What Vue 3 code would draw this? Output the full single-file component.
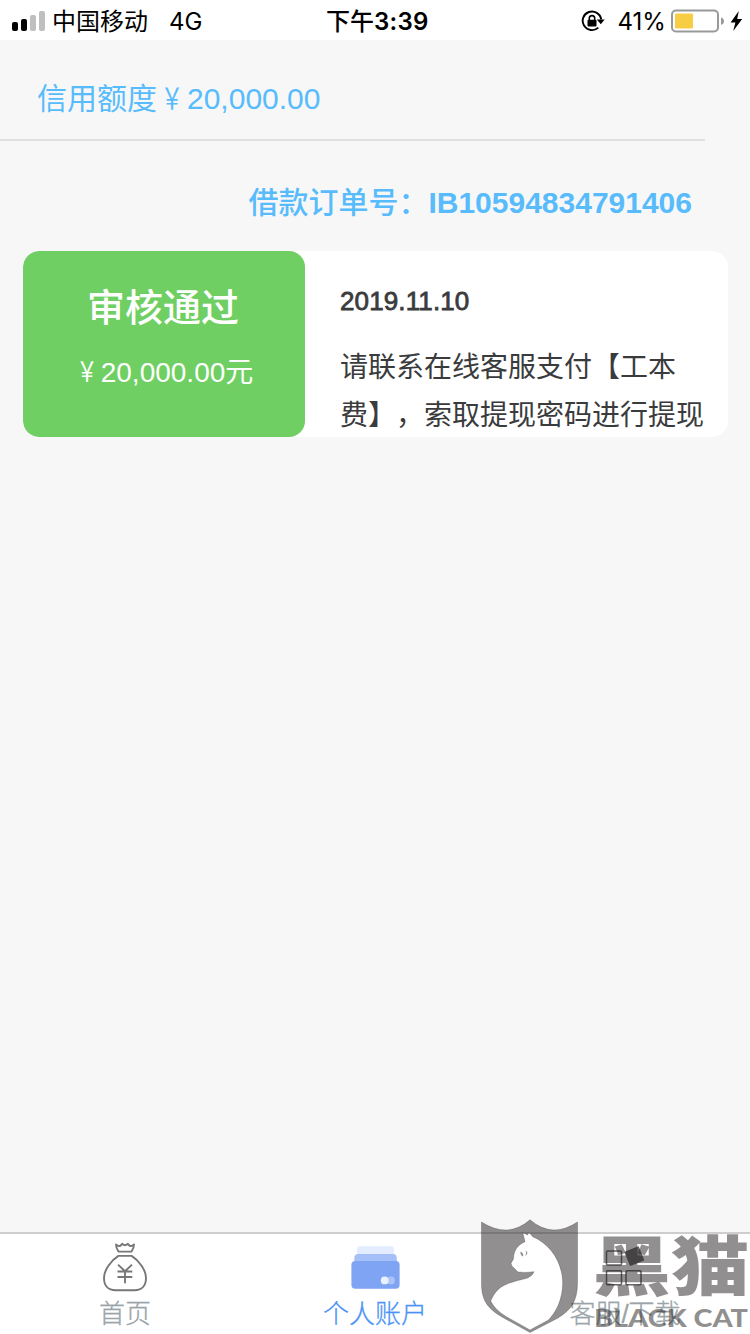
<template>
  <div class="account-page">
    <header class="status-bar">
      <div class="status-left">
        <svg class="signal" width="34" height="22" viewBox="0 0 34 22">
          <rect x="0" y="12" width="6" height="9" rx="2" fill="#000" />
          <rect x="9" y="9" width="6" height="12" rx="2" fill="#000" />
          <rect x="18" y="5" width="6" height="16" rx="2" fill="#bfbfbf" />
          <rect x="27" y="1" width="6" height="20" rx="2" fill="#bfbfbf" />
        </svg>
        <span class="carrier">中国移动</span>
        <span class="network">4G</span>
      </div>
      <div class="status-time">下午<b>3:39</b></div>
      <div class="status-right">
        <svg class="lock" width="24" height="24" viewBox="0 0 24 24">
          <path d="M17.3 18.6A9.3 9.3 0 1 1 20.2 10.5" fill="none" stroke="#000" stroke-width="1.9" />
          <path d="M15.8 10.6h7.9l-3.9 4.7z" fill="#000" />
          <rect x="6.5" y="10.8" width="9" height="6.8" rx="1" fill="#000" />
          <path d="M8.3 11.5V9.3a2.7 2.7 0 0 1 5.4 0v2.2" fill="none" stroke="#000" stroke-width="1.6" />
        </svg>
        <span class="percent">{{ battery }}%</span>
        <svg class="battery" width="54" height="24" viewBox="0 0 54 24">
          <rect x="1" y="1.5" width="46" height="21" rx="4" fill="#fff" stroke="#999" stroke-width="2" />
          <rect x="4" y="4.5" width="18" height="15" rx="1" fill="#f7cd46" />
          <path d="M50 8.5q3 1 3 3.7t-3 3.7z" fill="#999" />
        </svg>
        <svg class="bolt" width="13" height="20" viewBox="0 0 13 20">
          <path d="M8.8 0L0.6 11.4h4.8L3.2 20L12.2 8H7.2z" fill="#000" />
        </svg>
      </div>
    </header>

    <main class="content">
      <div class="credit">信用额度<i class="yuan">￥</i>20,000.00</div>
      <div class="order"><span>借款订单号：</span>{{ orderNo }}</div>

      <section class="card">
        <div class="card-status">
          <div class="status-title">审核通过</div>
          <div class="status-amount"><i class="yuan">￥</i>20,000.00元</div>
        </div>
        <div class="card-info">
          <div class="date">2019.11.10</div>
          <p class="message">请联系在线客服支付【工本费】，索取提现密码进行提现</p>
        </div>
      </section>
    </main>

    <nav class="tab-bar">
      <div
        v-for="tab in tabs"
        :key="tab.id"
        class="tab"
        :class="{ active: current === tab.id }"
        @click="current = tab.id"
      >
        <!-- 钱袋 -->
        <svg v-if="tab.id === 'home'" width="50" height="50" viewBox="0 0 50 50" fill="none" stroke="#777" stroke-width="1.9">
          <path d="M18.6 9.6Q16 6 16 2.4Q18 4.6 20.3 3.8L22.4 1.8Q25 4.6 27.6 1.8L29.7 3.8Q32 4.6 34 2.4Q34 6 31.4 9.6Z" stroke-linejoin="round" />
          <path d="M18.4 13.9H31.6C39 18.5 46 28 46 36C46 44 41.5 48.2 34.5 48.2H15.5C8.5 48.2 4 44 4 36C4 28 11 18.5 18.4 13.9Z" />
          <path d="M18 22.6L25 29.3L32 22.6M25 29.3V41.3M17.5 29.5H32.3M17.5 35H32.3" />
        </svg>
        <!-- 钱包 -->
        <svg v-else-if="tab.id === 'account'" width="50" height="50" viewBox="0 0 50 50">
          <rect x="7" y="4.3" width="37" height="14" rx="3" fill="#e4edff" />
          <rect x="4.3" y="12" width="42.5" height="18" rx="4" fill="#a5c0f8" />
          <rect x="1.4" y="19" width="48.2" height="27.8" rx="4" fill="#7ea4f3" />
          <circle cx="41" cy="38.4" r="3.9" fill="#abc4f8" />
          <circle cx="34.7" cy="38.4" r="3.9" fill="#eaf1ff" />
        </svg>
        <!-- 应用 -->
        <svg v-else width="50" height="50" viewBox="0 0 50 50" fill="none" stroke="#666" stroke-width="1.5">
          <rect x="6.5" y="9" width="15" height="14" rx="1" />
          <rect x="6.5" y="28.8" width="15" height="14" rx="1" />
          <rect x="26" y="28.8" width="15" height="14" rx="1" />
          <rect x="26.5" y="6.5" width="15.5" height="15.5" rx="1" transform="rotate(-22 34 14)" fill="#666" stroke="none" />
        </svg>
        <span>{{ tab.label }}</span>
      </div>
    </nav>

    <svg class="watermark" width="270" height="115" viewBox="0 0 270 115">
      <g fill="#231f20" fill-opacity="0.5" stroke="#231f20" stroke-opacity="0.25" stroke-width="1">
        <path
          fill-rule="evenodd"
          d="M1.5 3Q28 20 50 0.8Q72 20 97.5 3V64C97.5 82 91 91 78 99L50 113.5L22 98C7 89 1.5 81 1.5 64Z
             M10.7 82C15 72 20 68 27 65C37 61 44 60.5 48.5 58.5Q53 56 54 52.7Q45 54 38 53L34.5 49.5Q31 47 31 44.3L33.5 40C33.5 31 38 26 45 22.7L42.8 13.5L47.6 16L49 13.3L52.7 17.7C70 25 82.5 43 82.7 64C82.5 81 76 93 68.5 101L50 111L26 97.5Q15 91 10.7 82Z"
        />
        <path d="M40.5 32.5Q44 34 43 37.5Q40 36 40.5 32.5ZM45.5 31.5Q49.5 34 45 37Q47 34 45.5 31.5Z" stroke="none" />
      </g>
      <text class="mark-cn" x="0" y="0" transform="translate(112.5 70.5) scale(1 0.89)" textLength="157" lengthAdjust="spacingAndGlyphs">黑猫</text>
      <text class="mark-en" x="114" y="107.5" textLength="154" lengthAdjust="spacingAndGlyphs">BLACK CAT</text>
    </svg>
  </div>
</template>

<script setup>
import { ref } from 'vue';

const battery = ref(41);
const orderNo = ref('IB10594834791406');

// 当前选中的底部标签
const current = ref('account');
const tabs = [
  { id: 'home', label: '首页' },
  { id: 'account', label: '个人账户' },
  { id: 'service', label: '客服/下载' }
];
</script>

<style>
body {
  margin: 0;
  background: #f7f7f7;
}
</style>

<style scoped>
.account-page {
  position: relative;
  display: flex;
  flex-direction: column;
  width: 750px;
  height: 1334px;
  overflow: hidden;
  background: #f7f7f7;
  font-family: "Liberation Sans", "Noto Sans CJK SC", sans-serif;
  text-spacing-trim: space-all;
  white-space: nowrap;
}

.status-bar {
  display: grid;
  grid-template-columns: 314px 1fr 315px;
  align-items: center;
  box-sizing: border-box;
  height: 40px;
  padding: 0 9px 0 12px;
  background: #fff;
  color: #000;
  font-family: Inter, "Noto Sans CJK SC", sans-serif;
  font-size: 24px;
  line-height: 40px;
}

.status-left,
.status-right {
  display: flex;
  align-items: center;
}

.status-right {
  justify-content: flex-end;
}

.carrier {
  margin-left: 6px;
  padding-top: 2px;
}

.network {
  margin-left: 21px;
  padding-top: 2px;
}

.status-time {
  padding-top: 2px;
  font-weight: 500;
}

.status-time b {
  font-weight: 600;
  letter-spacing: 0.3px;
}

.percent {
  margin: 0 5px 0 12px;
  padding-top: 2px;
}

.bolt {
  margin: 0 1px 0 5px;
}

.content {
  flex: 1;
}

.yuan {
  display: inline-block;
  font-style: normal;
  transform: scaleX(0.75);
}

.credit {
  width: 705px;
  height: 101px;
  box-sizing: border-box;
  padding: 37px 0 0 37px;
  border-bottom: 2px solid #e0e0e0;
  color: #58bcfc;
  font-size: 30px;
  line-height: 44px;
}

.order {
  padding: 40px 58px 0 0;
  color: #58bcfc;
  font-size: 30px;
  font-weight: 700;
  line-height: 44px;
  text-align: right;
}

.order span {
  font-weight: 500;
}

.card {
  display: flex;
  width: 705px;
  height: 186px;
  margin: 26px 0 0 23px;
  border-radius: 16px;
  background: #fff;
  overflow: hidden;
}

.card-status {
  box-sizing: border-box;
  width: 282px;
  padding-right: 2px;
  border-radius: 16px;
  background: #6fcf63;
  color: #fff;
  text-align: center;
}

.status-title {
  padding-top: 29px;
  font-size: 38px;
  font-weight: 500;
  line-height: 56px;
}

.status-amount {
  padding-top: 17px;
  font-size: 28px;
  line-height: 40px;
}

.card-info {
  padding-left: 35px;
  color: #3a3b3d;
}

.date {
  padding-top: 30px;
  font-size: 26px;
  letter-spacing: 0.12px;
  line-height: 40px;
  -webkit-text-stroke: 0.8px #3a3b3d;
}

.message {
  width: 370px;
  margin: 23px 0 0;
  font-size: 28px;
  line-height: 48px;
  white-space: normal;
}

.tab-bar {
  display: flex;
  box-sizing: border-box;
  height: 102px;
  border-top: 2px solid #cecece;
  background: #fff;
}

.tab {
  display: flex;
  flex: 1;
  flex-direction: column;
  align-items: center;
  padding-top: 8px;
  color: #9ba4a9;
  font-size: 26px;
  font-weight: 300;
  line-height: 40px;
  -webkit-text-stroke: 0.3px currentColor;
}

.tab span {
  margin-top: 2px;
}

.tab.active {
  color: #4c93f5;
}

.watermark {
  position: absolute;
  right: 0;
  bottom: 0;
  overflow: visible;
  pointer-events: none;
}

.mark-cn,
.mark-en {
  fill: #231f20;
  fill-opacity: 0.5;
}

.mark-cn {
  font-family: "Noto Sans CJK SC", sans-serif;
  font-size: 73px;
  font-weight: 900;
}

.mark-en {
  font-family: Lato, "Liberation Sans", sans-serif;
  font-size: 25px;
  font-weight: 900;
}
</style>
